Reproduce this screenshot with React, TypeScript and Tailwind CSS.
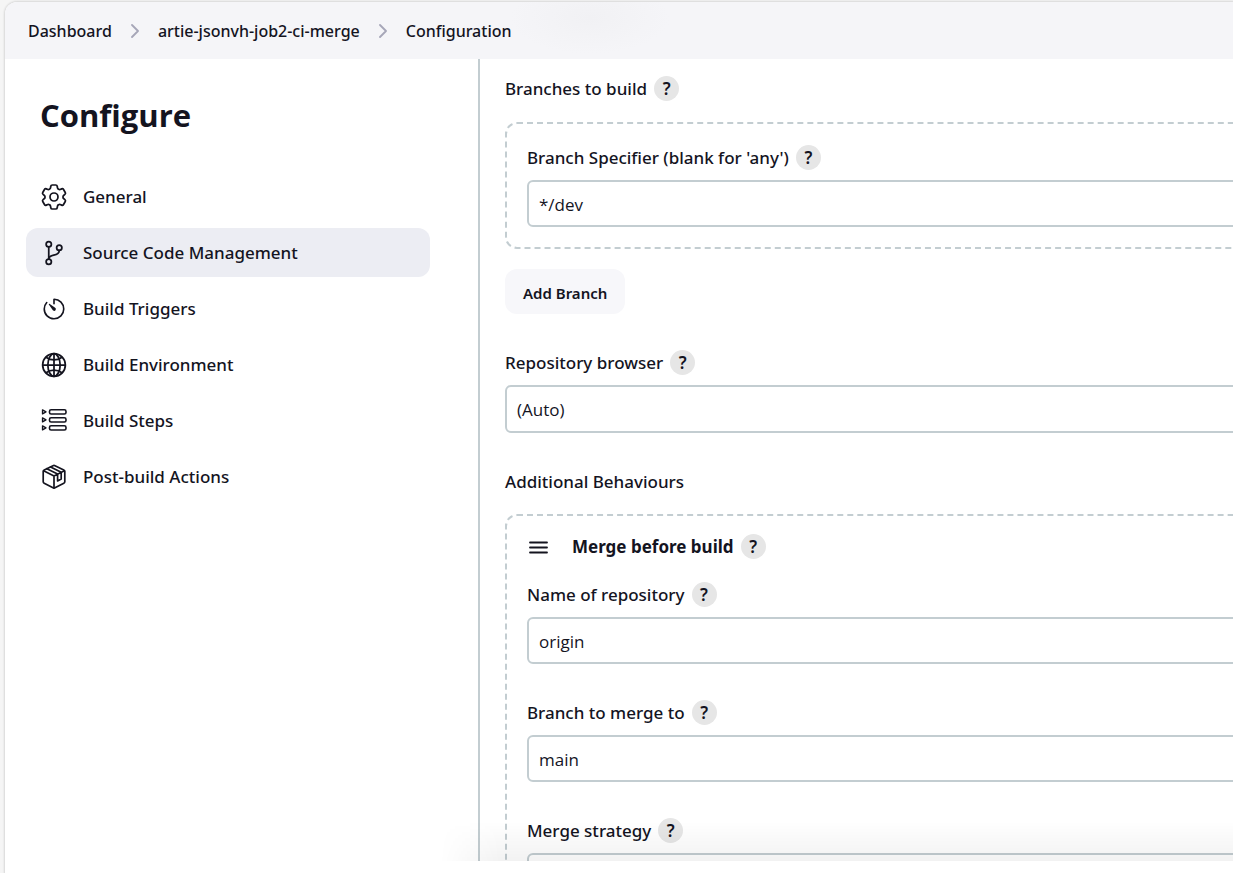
import type { ReactNode } from "react";
import { HiOutlineCog6Tooth } from "react-icons/hi2";
import { IoGitBranchOutline, IoGlobeOutline, IoTimerOutline } from "react-icons/io5";

function StepsIcon() {
  return (
    <svg viewBox="0 0 26 26" className="size-[26px]" fill="none" stroke="currentColor" strokeWidth="1.6" strokeLinejoin="round">
      <rect x="8.500" y="1.800" width="16.500" height="4.200" rx="1.600" />
      <rect x="8.500" y="9.800" width="16.500" height="4.200" rx="1.600" />
      <rect x="8.500" y="17.800" width="16.500" height="4.200" rx="1.600" />
      <path d="M1.500 1.900v4L5 3.900zM1.500 9.900v4L5 11.900zM1.500 17.900v4L5 19.900z" strokeWidth="1.300" />
    </svg>
  );
}

function PackageIcon() {
  return (
    <svg viewBox="0 0 26 26" className="size-[26px]" fill="none" stroke="currentColor" strokeWidth="1.7" strokeLinejoin="round" strokeLinecap="round">
      <path d="M12 1.700q1-.5 2 0L22.800 6q1 .5 1 1.500v10.200q0 1-1 1.500L14 23.800q-1 .5-2 0l-8.800-4.600q-1-.5-1-1.500V7.500q0-1 1-1.500z" />
      <path d="M2.600 6.800 13 12l10.400-5.200M13 12v12M5.800 4.700 16.600 10v7l3.600-1.900V8.300L9.600 2.900" />
    </svg>
  );
}

const sections: { name: string; icon: ReactNode; current?: boolean }[] = [
  { name: "General", icon: <HiOutlineCog6Tooth size={32} strokeWidth={1.3} className="-mx-[3px]" /> },
  { name: "Source Code Management", icon: <IoGitBranchOutline size={28} className="-mx-px" />, current: true },
  { name: "Build Triggers", icon: <IoTimerOutline size={26} /> },
  { name: "Build Environment", icon: <IoGlobeOutline size={28} className="-mx-px" /> },
  { name: "Build Steps", icon: <StepsIcon /> },
  { name: "Post-build Actions", icon: <PackageIcon /> },
];

function Help({ topic }: { topic: string }) {
  return (
    <button
      type="button"
      aria-label={`Help for feature: ${topic}`}
      className="flex size-[25px] shrink-0 items-center justify-center rounded-full bg-[#e6e6e6] text-[17px] font-semibold leading-none"
    >
      ?
    </button>
  );
}

function LabelRow({ id, text }: { id: string; text: string }) {
  return (
    <div className="flex h-[25px] items-center gap-[7px]">
      <label htmlFor={id}>{text}</label>
      <Help topic={text} />
    </div>
  );
}

const control =
  "mt-[10px] block w-full appearance-none rounded-md border-2 border-[#c3cdd1] bg-white px-[10px] pt-[2px] font-['Open_Sans',sans-serif] font-normal outline-none";

function TextField({ id, text, value }: { id: string; text: string; value: string }) {
  return (
    <div>
      <LabelRow id={id} text={text} />
      <input id={id} type="text" defaultValue={value} className={`${control} h-[47px]`} />
    </div>
  );
}

function SelectField({ id, text, options }: { id: string; text: string; options: string[] }) {
  return (
    <div>
      <LabelRow id={id} text={text} />
      <select id={id} className={`${control} h-12`}>
        {options.map((option) => (
          <option key={option}>{option}</option>
        ))}
      </select>
    </div>
  );
}

function Chevron() {
  return (
    <svg viewBox="0 0 8 14" className="h-[14px] w-2" fill="none" stroke="#a6a6b8" strokeWidth="1.8" strokeLinecap="round" strokeLinejoin="round">
      <path d="M1 1l6 6-6 6" />
    </svg>
  );
}

export default function App() {
  return (
    <div className="h-screen overflow-hidden bg-[#f5f5f5] pl-[5px] pt-[2px] font-['Noto_Sans','Open_Sans',sans-serif] text-[17px] font-medium text-[#14141f]">
      <div className="flex h-full flex-col overflow-hidden rounded-tl-xl bg-white pb-3 shadow-[0_0_2px_1px_rgba(0,0,0,0.12)]">
        <header className="h-[57px] shrink-0 bg-[#f5f5f8] bg-[radial-gradient(80px_36px_at_585px_16px,#f1f1f4,transparent)] text-base">
          <nav aria-label="Breadcrumb" className="flex h-full items-center gap-[19px] pl-[23px]">
            <a href="#dashboard">Dashboard</a>
            <Chevron />
            <a href="#job">artie-jsonvh-job2-ci-merge</a>
            <Chevron />
            <a href="#configuration">Configuration</a>
          </nav>
        </header>

        <div className="relative flex min-h-0 flex-1">
          <aside className="w-[473px] shrink-0 pl-[21px] pr-12 pt-[35px]">
            <h1 className="pl-[14px] font-['Open_Sans',sans-serif] text-[31px] font-bold leading-[42px]">Configure</h1>
            <nav aria-label="Configuration sections" className="mt-9 flex flex-col gap-[7px]">
              {sections.map((section) => (
                <a
                  key={section.name}
                  href="#section"
                  aria-current={section.current ? "true" : undefined}
                  className={`flex h-[49px] items-center gap-4 rounded-xl pl-[15px] ${section.current ? "bg-[#ecedf3]" : ""}`}
                >
                  {section.icon}
                  {section.name}
                </a>
              ))}
            </nav>
          </aside>

          <main className="min-w-0 flex-1 overflow-hidden border-l-2 border-[#c3cdd1] pl-[25px] pt-[17px]">
            <form className="-mr-10">
              <div className="flex h-[25px] items-center gap-[7px]">
                <span>Branches to build</span>
                <Help topic="Branches to build" />
              </div>
              <div className="mt-[21px] rounded-xl border-2 border-dashed border-[#c3cdd1] px-5 pb-5 pt-[21px]">
                <TextField id="specifier" text="Branch Specifier (blank for 'any')" value="*/dev" />
              </div>
              <button type="button" className="mt-5 h-[45px] rounded-xl bg-[#f7f7fa] px-[18px] pt-1 text-[15px] font-semibold">
                Add Branch
              </button>

              <div className="mt-9">
                <SelectField id="browser" text="Repository browser" options={["(Auto)"]} />
              </div>

              <h2 className="mt-9 leading-[25px]">Additional Behaviours</h2>
              <section className="mt-5 rounded-xl border-2 border-dashed border-[#c3cdd1] px-5 py-[18px]">
                <div className="flex h-[25px] items-center">
                  <svg viewBox="0 0 24 24" className="size-6" stroke="currentColor" strokeWidth="1.8" strokeLinecap="round">
                    <path d="M3 7.500h17M3 12.500h17M3 17.500h17" />
                  </svg>
                  <h3 className="ml-[21px] mr-[7px] font-bold">Merge before build</h3>
                  <Help topic="Merge before build" />
                </div>
                <div className="mt-[23px] flex flex-col gap-9">
                  <TextField id="repository" text="Name of repository" value="origin" />
                  <TextField id="target" text="Branch to merge to" value="main" />
                  <SelectField id="strategy" text="Merge strategy" options={[""]} />
                </div>
              </section>
            </form>
          </main>
          <div className="pointer-events-none absolute bottom-0 left-[435px] right-0 h-10 bg-linear-to-b from-transparent to-black/5 mask-[linear-gradient(to_right,transparent,black_60px)]" />
        </div>
      </div>
    </div>
  );
}
